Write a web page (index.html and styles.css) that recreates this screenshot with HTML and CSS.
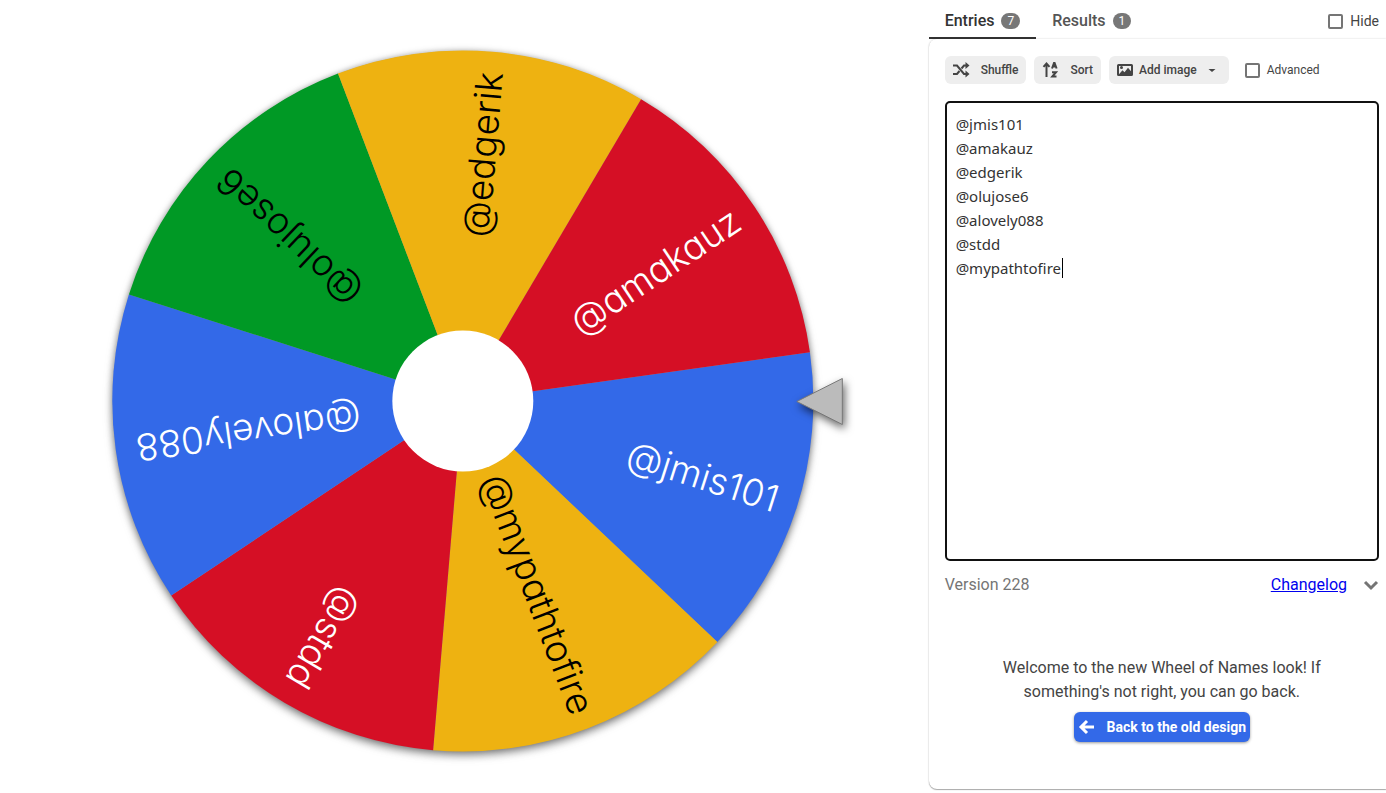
FILE: index.html
```html
<!DOCTYPE html>
<html lang="en">
<head>
    <meta charset="UTF-8">
    <meta name="viewport" content="width=device-width, initial-scale=1.0">
    <title>Wheel of Names</title>
    <link rel="stylesheet" href="styles.css">
</head>
<body>

<main class="wheel-area">
    <svg class="wheel" viewBox="-395 -401 793 793" role="img" aria-label="Wheel of names">
        <circle class="wheel-disc" r="350"/>
        <g class="slices">
            <path class="blue" d="M0 0 347.1 -48.8A350.5 350.5 0 0 1 254.5 241z"/>
            <path class="yellow" d="M0 0 254.5 241A350.5 350.5 0 0 1 -29.7 349.2z"/>
            <path class="red" d="M0 0 -29.7 349.2A350.5 350.5 0 0 1 -291.6 194.5z"/>
            <path class="blue" d="M0 0 -291.6 194.5A350.5 350.5 0 0 1 -333.9 -106.6z"/>
            <path class="green" d="M0 0 -333.9 -106.6A350.5 350.5 0 0 1 -124.8 -327.5z"/>
            <path class="yellow" d="M0 0 -124.8 -327.5A350.5 350.5 0 0 1 178.3 -301.8z"/>
            <path class="red" d="M0 0 178.3 -301.8A350.5 350.5 0 0 1 347.1 -48.8z"/>
        </g>
        <g class="names">
            <text class="light" x="330" y="12" transform="rotate(17.7)">@jmis101</text>
            <text x="334" y="12" transform="rotate(69.1)">@mypathtofire</text>
            <text class="light" x="330" y="12" transform="rotate(120.6)">@stdd</text>
            <text class="light" x="330" y="12" transform="rotate(172)">@alovely088</text>
            <text x="330" y="12" transform="rotate(223.4)">@olujose6</text>
            <text x="330" y="12" transform="rotate(274.9)">@edgerik</text>
            <text class="light" x="330" y="12" transform="rotate(326.3)">@amakauz</text>
        </g>
        <circle class="hub" r="70.5"/>
        <path class="pointer" d="M334 0.5 379.5 -22.5V23.5z"/>
    </svg>
</main>

<aside class="sidebar">
    <nav class="tabs">
        <button class="tab active" type="button">Entries <span class="badge">7</span></button>
        <button class="tab" type="button">Results <span class="badge">1</span></button>
        <label class="check hide"><input type="checkbox"> Hide</label>
    </nav>

    <section class="card">
        <div class="toolbar">
            <button class="tool" type="button">
                <svg viewBox="0 0 18 18"><path class="line" d="M0 4.500h4L11 13h3M0 13h4l2.500-3M8.500 7.500 11 4.500h3"/><path d="M12.500 1 16.500 4.500 12.500 8zM12.500 9.500 16.500 13 12.500 16.500z"/></svg>
                <span class="gap-text">Shuffle</span>
            </button>
            <button class="tool" type="button">
                <svg viewBox="0 0 18 18"><path class="line" d="M4.500 16V3M1.500 5.800 4.500 2.500 7.500 5.800M10 7.500 12 2h.6l2 5.500M10.800 5.500h3M10 11.200h4L10.300 15.500h4.200"/></svg>
                <span class="gap-text">Sort</span>
            </button>
            <button class="tool image" type="button">
                <svg viewBox="0 0 18 18"><path fill-rule="evenodd" d="M1.500 3h13a1.500 1.500 0 0 1 1.500 1.500v9a1.500 1.500 0 0 1-1.500 1.500h-13A1.500 1.500 0 0 1 0 13.500v-9A1.500 1.500 0 0 1 1.500 3zM2 5v8.200l3.500-4 2 2 3.500-4.500 3 3.500V5z"/><circle cx="4.500" cy="6.500" r="1.500"/></svg>
                <span>Add image</span>
                <svg class="arrow" viewBox="0 0 18 18"><path d="M5.500 8h7L9 11z"/></svg>
            </button>
            <label class="check small"><input type="checkbox"> Advanced</label>
        </div>

        <div class="entries">
            <textarea aria-label="Entries" spellcheck="false">@jmis101
@amakauz
@edgerik
@olujose6
@alovely088
@stdd
@mypathtofire</textarea>
            <span class="caret"></span>
        </div>

        <div class="version">
            <span>Version 228</span>
            <a href="#changelog">Changelog</a>
            <button class="expand" type="button" aria-label="Expand"><svg viewBox="0 0 16 16"><path d="M2 5l6 6 6-6"/></svg></button>
        </div>

        <div class="welcome">
            <p>Welcome to the new Wheel of Names look! If something's not right, you can go back.</p>
            <button class="back" type="button">
                <svg viewBox="0 0 18 18"><path d="M16 9H3M9 3 3 9l6 6"/></svg>
                Back to the old design
            </button>
        </div>
    </section>
</aside>

</body>
</html>
```

FILE: styles.css
```css
* {
    box-sizing: border-box;
}
body {
    font-family: Roboto, sans-serif;
    font-size: 16px;
    line-height: 24px;
    margin: 0;
    display: flex;
    min-height: 100vh;
    background-color: white;
    color: #444;
    overflow: hidden;
}
button {
    font-family: inherit;
    border: none;
    padding: 0;
    cursor: pointer;
}

/* wheel */
.wheel-area {
    flex: 1;
    min-width: 0;
    display: flex;
    justify-content: center;
    align-items: center;
}
.wheel {
    width: 100%;
    height: 100vh;
}
.wheel-disc {
    fill: #999;
    filter: drop-shadow(0 4px 4px rgba(0, 0, 0, 0.4)) drop-shadow(0 0 3px rgba(0, 0, 0, 0.3));
}
.blue {
    fill: #3369e8;
}
.yellow {
    fill: #eeb211;
}
.red {
    fill: #d50f25;
}
.green {
    fill: #009925;
}
.names {
    font-family: Inter, sans-serif;
    font-size: 37px;
    font-weight: 300;
    font-feature-settings: "cv11";
    text-anchor: end;
}
.names .light {
    fill: white;
}
.hub {
    fill: white;
}
.pointer {
    fill: #bbb;
    stroke: #777;
    filter: drop-shadow(2px 4px 4px rgba(0, 0, 0, 0.6));
}

/* sidebar */
.sidebar {
    width: 33%;
    min-width: 440px;
    display: flex;
    flex-direction: column;
}
.tabs {
    display: flex;
    align-items: center;
    height: 39px;
    padding-right: 7px;
}
.tab {
    display: flex;
    align-items: center;
    gap: 7px;
    height: 39px;
    padding: 4px 16px 0;
    background: none;
    border-bottom: 2px solid transparent;
    color: #555;
    font-size: 16px;
    font-weight: 500;
}
.tab.active {
    color: #333;
    border-color: #333;
}
.badge {
    padding: 0 6px;
    border-radius: 8px;
    background-color: #777;
    color: white;
    font-size: 12px;
    font-weight: 400;
    line-height: 16px;
}
.check {
    display: flex;
    align-items: center;
    gap: 7px;
    font-size: 14px;
}
.check input {
    appearance: none;
    width: 15px;
    height: 15px;
    margin: 0;
    border: 2px solid #757575;
    border-radius: 2px;
}
.hide {
    margin-left: auto;
    padding-top: 3px;
}
.small {
    margin-left: 8px;
    font-size: 12px;
}
.card {
    flex: 1;
    margin-bottom: 4px;
    padding: 17px 7px 0 16px;
    border-radius: 8px 0 0 8px;
    box-shadow: 0 0 2px rgba(0, 0, 0, 0.2), 0 1px 1px rgba(0, 0, 0, 0.3);
}
.toolbar {
    display: flex;
    gap: 8px;
}
.tool {
    display: flex;
    align-items: center;
    height: 28px;
    padding: 0 8px;
    border-radius: 6px;
    background-color: #eee;
    color: #444;
    font-size: 12px;
    font-weight: 500;
}
.tool svg {
    width: 18px;
    height: 18px;
    margin-right: 5px;
    fill: #444;
}
.tool .line {
    fill: none;
    stroke: #444;
    stroke-width: 2;
}
.tool.image svg {
    margin-right: 4px;
}
.tool.image .arrow {
    margin: 0 0 0 6px;
}
.gap-text {
    margin-left: 5px;
}
.entries {
    position: relative;
    margin-top: 17px;
}
.entries textarea {
    display: block;
    width: 100%;
    height: 460px;
    padding: 9px;
    border: 2px solid #111;
    border-radius: 5px;
    outline: none;
    resize: none;
    color: #333;
    font-family: "Noto Sans", "Open Sans", sans-serif;
    font-size: 15px;
    line-height: 24px;
}
.caret {
    position: absolute;
    left: 117px;
    top: 157px;
    width: 1px;
    height: 20px;
    background-color: black;
}
.version {
    display: flex;
    align-items: center;
    margin-top: 12px;
    color: #757575;
}
.version a {
    margin-left: auto;
    color: #0000ee;
}
.expand {
    width: 16px;
    height: 16px;
    margin-left: 16px;
    background: none;
}
.expand svg {
    display: block;
    fill: none;
    stroke: #757575;
    stroke-width: 3;
}
.welcome {
    display: flex;
    flex-direction: column;
    align-items: center;
    margin-top: 59px;
    text-align: center;
}
.welcome p {
    max-width: 340px;
    margin: 0 0 8px;
}
.back {
    display: flex;
    align-items: center;
    gap: 11px;
    height: 30px;
    padding: 0 4px;
    border-radius: 6px;
    background-color: #3369e8;
    box-shadow: 0 1px 3px rgba(0, 0, 0, 0.4);
    color: white;
    font-size: 14px;
    font-weight: 700;
}
.back svg {
    width: 18px;
    height: 18px;
    fill: none;
    stroke: white;
    stroke-width: 3;
}
```
